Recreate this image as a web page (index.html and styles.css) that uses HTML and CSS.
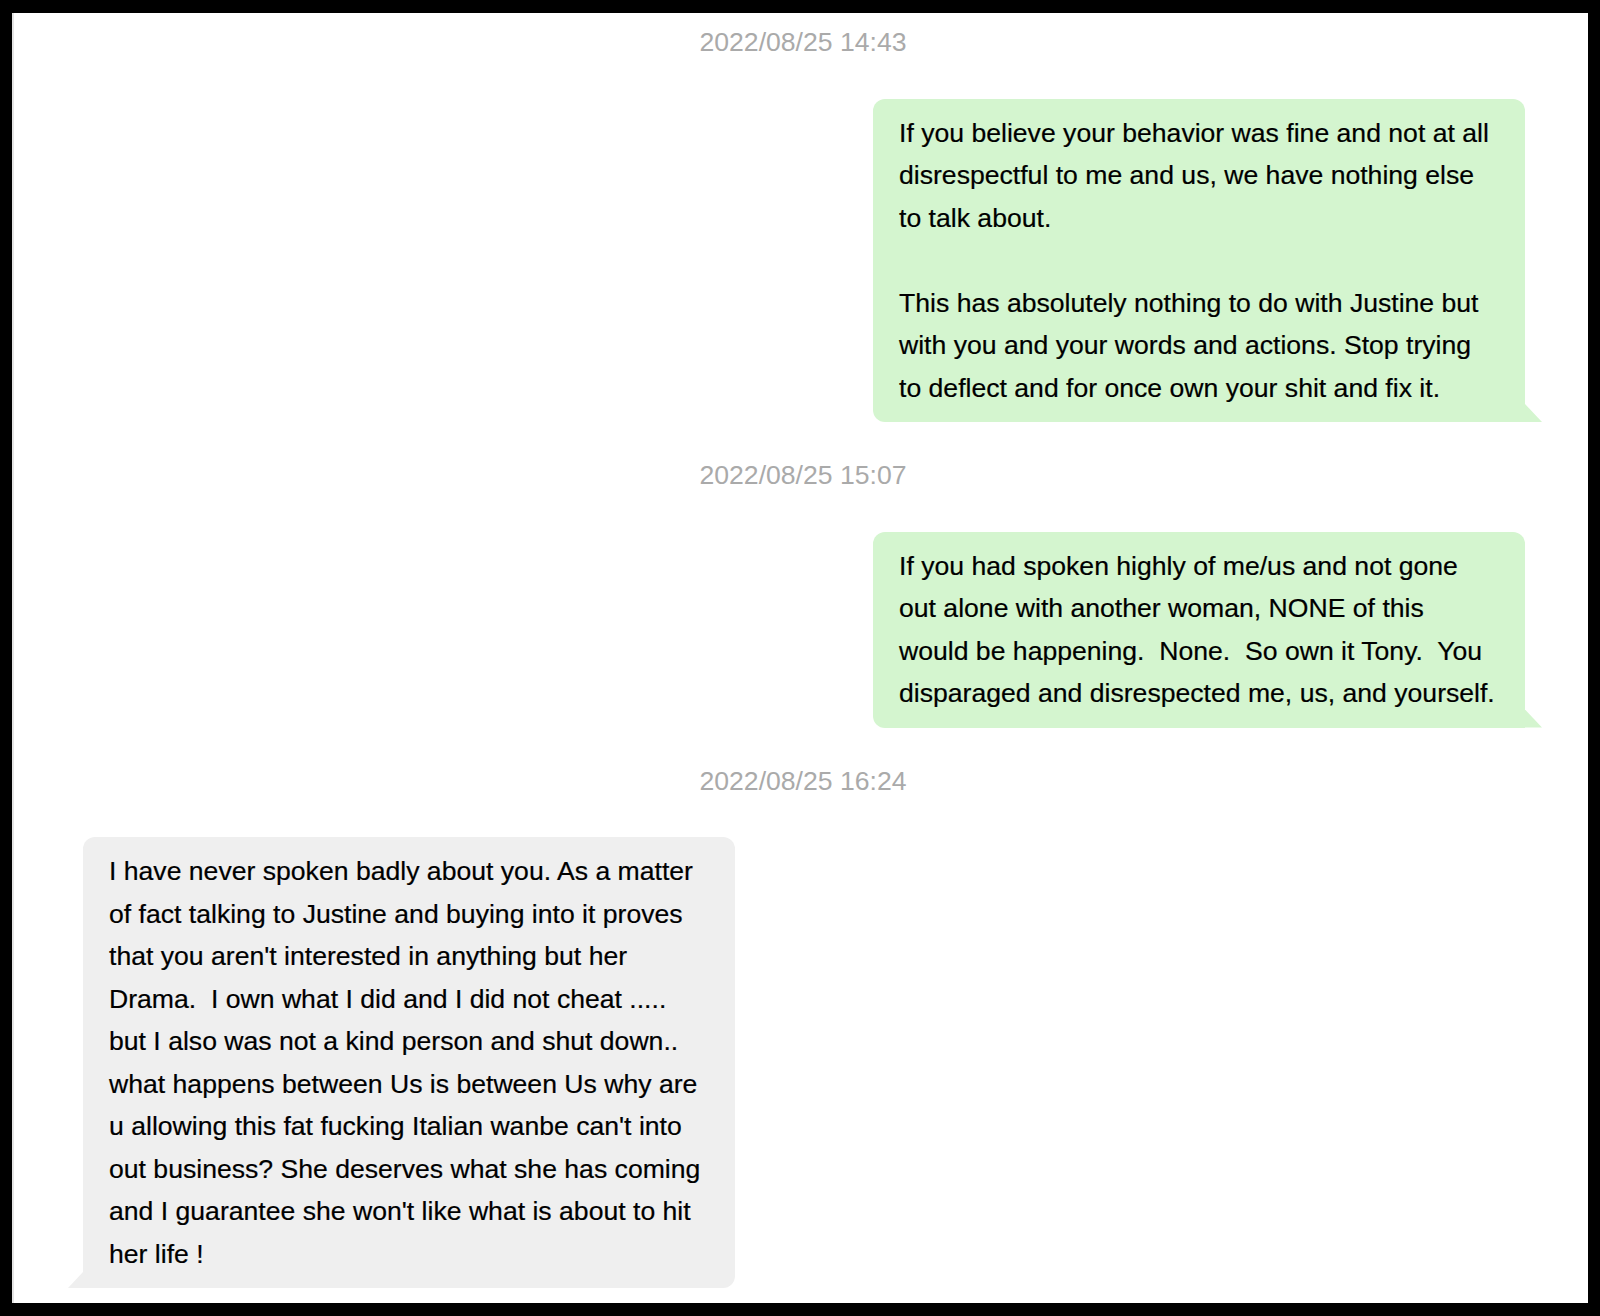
FILE: index.html
```html
<!DOCTYPE html>
<html lang="en">
<head>
<meta charset="utf-8">
<title>Messages</title>
<link rel="stylesheet" href="styles.css">
</head>
<body>
<div class="frame">
  <div class="stamp">2022/08/25 14:43</div>
  <div class="row row-out">
    <div class="bubble bubble-out">If you believe your behavior was fine and not at all<br>disrespectful to me and us, we have nothing else<br>to talk about.<br><br>This has absolutely nothing to do with Justine but<br>with you and your words and actions. Stop trying<br>to deflect and for once own your shit and fix it.</div>
  </div>
  <div class="stamp">2022/08/25 15:07</div>
  <div class="row row-out">
    <div class="bubble bubble-out">If you had spoken highly of me/us and not gone<br>out alone with another woman, NONE of this<br>would be happening.&nbsp; None.&nbsp; So own it Tony.&nbsp; You<br>disparaged and disrespected me, us, and yourself.</div>
  </div>
  <div class="stamp">2022/08/25 16:24</div>
  <div class="row row-in">
    <div class="bubble bubble-in">I have never spoken badly about you. As a matter<br>of fact talking to Justine and buying into it proves<br>that you aren't interested in anything but her<br>Drama.&nbsp; I own what I did and I did not cheat .....<br>but I also was not a kind person and shut down..<br>what happens between Us is between Us why are<br>u allowing this fat fucking Italian wanbe can't into<br>out business? She deserves what she has coming<br>and I guarantee she won't like what is about to hit<br>her life !</div>
  </div>
</div>
</body>
</html>
```
FILE: styles.css
```css
html, body {
  margin: 0;
  padding: 0;
  background: #000;
}
body {
  width: 1600px;
  height: 1316px;
  padding: 13px 12px;
  box-sizing: border-box;
  font-family: "Liberation Sans", Arial, Helvetica, sans-serif;
}
.frame {
  height: 1290px;
  background: #fff;
  border-left: 2px solid #e4e4e4;
  box-sizing: border-box;
  padding-top: 14px;
  overflow: hidden;
}
.stamp {
  text-align: center;
  color: #aaaaaa;
  font-size: 26.6px;
  line-height: 30px;
  height: 30px;
  margin-bottom: 41.5px;
  padding-left: 4px;
}
.row {
  display: flex;
  margin-bottom: 38px;
}
.row-out {
  justify-content: flex-end;
  padding-right: 63px;
}
.row-in {
  justify-content: flex-start;
  padding-left: 69px;
}
.bubble {
  position: relative;
  width: 652px;
  box-sizing: border-box;
  padding: 13px 26px;
  font-size: 26.6px;
  line-height: 42.5px;
  color: #000;
  -webkit-text-stroke: 0.2px #000;
  border-radius: 12px;
  white-space: nowrap;
}
.bubble-out {
  background: #d4f5cf;
  border-bottom-right-radius: 0;
}
.bubble-out::after {
  content: "";
  position: absolute;
  right: -17px;
  bottom: 0;
  width: 17px;
  height: 18px;
  background: #d4f5cf;
  clip-path: polygon(0 0, 100% 100%, 0 100%);
}
.bubble-in {
  background: #efefef;
  border-bottom-left-radius: 0;
}
.bubble-in::after {
  content: "";
  position: absolute;
  left: -15px;
  bottom: 0;
  width: 15px;
  height: 16px;
  background: #efefef;
  clip-path: polygon(100% 0, 100% 100%, 0 100%);
}
```
